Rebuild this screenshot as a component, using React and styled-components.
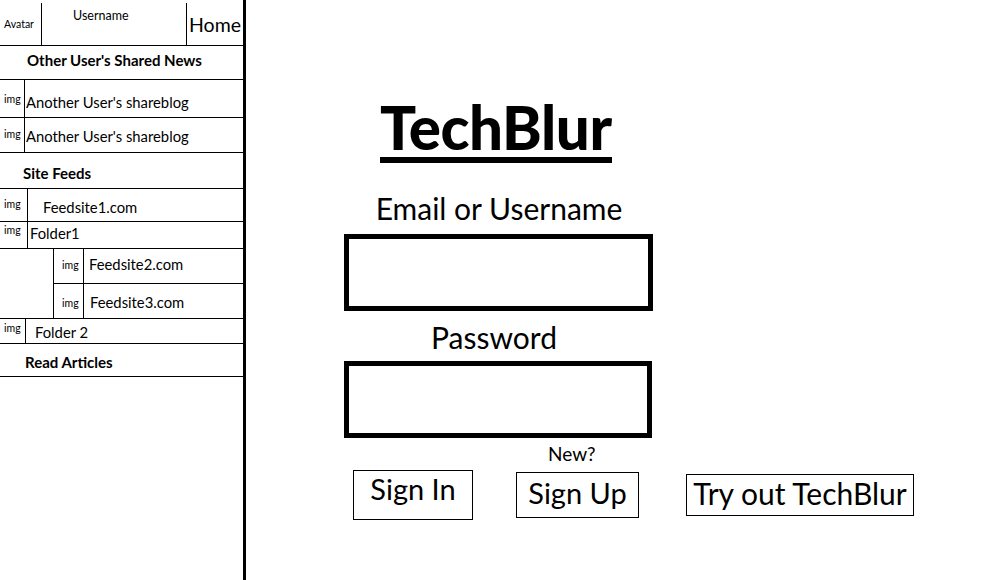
import styled, { createGlobalStyle } from 'styled-components'

const GlobalStyle = createGlobalStyle`
  html, body {
    margin: 0;
    padding: 0;
    background: #fff;
  }
  body {
    font-family: Lato, "Open Sans", sans-serif;
    color: #000;
  }
`;

const Page = styled.div`
  display: flex;
  width: 1003px;
  height: 580px;
  overflow: hidden;
`;

/* ---------- sidebar ---------- */

const Sidebar = styled.aside`
  width: 246px;
  height: 580px;
  box-sizing: border-box;
  border-right: 3px solid #000;
  display: flex;
  flex-direction: column;
  flex-shrink: 0;
`;

const Header = styled.div`
  display: flex;
  height: 46px;
  box-sizing: border-box;
  padding-top: 3px;
  border-bottom: 1px solid #000;
`;

const HeadCell = styled.div`
  width: ${(p) => p.w}px;
  flex: ${(p) => (p.grow ? 1 : 'none')};
  border-right: ${(p) => (p.noBorder ? 'none' : '1px solid #000')};
  display: flex;
  justify-content: flex-start;
  align-items: ${(p) => p.align || 'center'};
  font-size: ${(p) => p.size}px;
  padding: ${(p) => p.pad || '0'};
  box-sizing: border-box;
  white-space: nowrap;
`;

const Section = styled.div`
  height: ${(p) => p.h}px;
  box-sizing: border-box;
  border-bottom: 1px solid #000;
  display: flex;
  align-items: center;
  padding-left: ${(p) => p.indent}px;
  padding-top: ${(p) => p.drop || 0}px;
  padding-bottom: ${(p) => p.lift || 0}px;
  font-weight: 700;
  font-size: 15px;
`;

const Row = styled.div`
  display: flex;
  height: ${(p) => p.h}px;
  box-sizing: border-box;
  border-bottom: ${(p) => (p.noLine ? 'none' : '1px solid #000')};
`;

const ImgCell = styled.div`
  width: ${(p) => p.w}px;
  flex-shrink: 0;
  box-sizing: border-box;
  border-right: 1px solid #000;
  font-size: 10.5px;
  padding: ${(p) => p.pad || '6px 0 0 4px'};
  line-height: 1;
`;

const RowText = styled.div`
  flex: 1;
  display: flex;
  align-items: center;
  padding-left: ${(p) => p.indent}px;
  padding-top: ${(p) => p.top || 0}px;
  padding-bottom: ${(p) => p.lift || 0}px;
  font-size: 14.8px;
  white-space: nowrap;
`;

const Nested = styled.div`
  display: flex;
  border-bottom: 1px solid #000;
`;

const Spacer = styled.div`
  width: 53px;
  flex-shrink: 0;
  border-right: 1px solid #000;
`;

const NestedList = styled.div`
  flex: 1;
  display: flex;
  flex-direction: column;
`;

/* ---------- login ---------- */

const Main = styled.main`
  flex: 1;
  position: relative;
`;

const Form = styled.div`
  width: 310px;
  margin-left: 98px;
  padding-top: 98px;
  display: flex;
  flex-direction: column;
  align-items: center;
`;

const Logo = styled.h1`
  margin: 0 0 0 36px;
  align-self: flex-start;
  font-size: 60px;
  font-weight: 900;
  line-height: 58px;
  padding-bottom: 1px;
  border-bottom: 6px solid #000;
  letter-spacing: -0.4px;
`;

const Label = styled.div`
  font-size: 30px;
  line-height: 34px;
  margin-top: ${(p) => p.top}px;
  margin-left: ${(p) => p.shift || 0}px;
`;

const InputBox = styled.div`
  width: ${(p) => p.w}px;
  height: 77px;
  box-sizing: border-box;
  border: 5px solid #000;
  margin-top: ${(p) => p.top}px;
  align-self: flex-start;
`;

const New = styled.div`
  font-size: 19px;
  align-self: flex-start;
  margin: 4px 0 0 204px;
`;

const Buttons = styled.div`
  position: absolute;
  left: 107px;
  top: 470px;
  display: flex;
  align-items: flex-start;
`;

const Btn = styled.div`
  width: ${(p) => p.w}px;
  height: ${(p) => p.h}px;
  margin-top: ${(p) => p.top || 0}px;
  margin-right: ${(p) => p.gap || 0}px;
  padding-bottom: ${(p) => p.lift || 0}px;
  box-sizing: border-box;
  border: 1px solid #000;
  display: flex;
  align-items: center;
  justify-content: center;
  font-size: ${(p) => p.size}px;
  white-space: nowrap;
`;

function App() {
  return (
    <>
      <GlobalStyle />
      <Page>
        <Sidebar>
          <Header>
            <HeadCell w={42} size={10.5} pad="0 0 0 4px">Avatar</HeadCell>
            <HeadCell w={145} size={12.5} align="flex-start" pad="5px 0 0 31px">
              Username
            </HeadCell>
            <HeadCell grow noBorder size={19.5} pad="0 0 0 2px">Home</HeadCell>
          </Header>

          <Section h={34} indent={27} lift={5}>Other User's Shared News</Section>
          <Row h={38}>
            <ImgCell w={25} pad="14px 0 0 4px">img</ImgCell>
            <RowText indent={1} top={6}>Another User's shareblog</RowText>
          </Row>
          <Row h={35}>
            <ImgCell w={25} pad="11px 0 0 4px">img</ImgCell>
            <RowText indent={1} top={1}>Another User's shareblog</RowText>
          </Row>

          <Section h={36} indent={23} drop={4}>Site Feeds</Section>
          <Row h={33}>
            <ImgCell w={28} pad="10px 0 0 4px">img</ImgCell>
            <RowText indent={15} top={4}>Feedsite1.com</RowText>
          </Row>
          <Row h={27}>
            <ImgCell w={28} pad="3px 0 0 4px">img</ImgCell>
            <RowText indent={2} lift={4}>Folder1</RowText>
          </Row>

          <Nested>
            <Spacer />
            <NestedList>
              <Row h={35}>
                <ImgCell w={30} pad="11px 0 0 8px">img</ImgCell>
                <RowText indent={5} lift={5}>Feedsite2.com</RowText>
              </Row>
              <Row h={34} noLine>
                <ImgCell w={30} pad="14px 0 0 8px">img</ImgCell>
                <RowText indent={6} top={1}>Feedsite3.com</RowText>
              </Row>
            </NestedList>
          </Nested>

          <Row h={25}>
            <ImgCell w={26} pad="4px 0 0 4px">img</ImgCell>
            <RowText indent={9} top={1}>Folder 2</RowText>
          </Row>
          <Section h={33} indent={25} drop={4}>Read Articles</Section>
        </Sidebar>

        <Main>
          <Form>
            <Logo>TechBlur</Logo>
            <Label top={28} shift={0}>Email or Username</Label>
            <InputBox w={309} top={9} />
            <Label top={9} shift={-10}>Password</Label>
            <InputBox w={308} top={7} />
            <New>New?</New>
          </Form>
          <Buttons>
            <Btn w={120} h={50} gap={43} size={29} lift={13}>Sign In</Btn>
            <Btn w={123} h={46} top={2} gap={47} size={29} lift={6}>Sign Up</Btn>
            <Btn w={228} h={42} top={4} size={30} lift={5}>Try out TechBlur</Btn>
          </Buttons>
        </Main>
      </Page>
    </>
  );
}

export default App;
